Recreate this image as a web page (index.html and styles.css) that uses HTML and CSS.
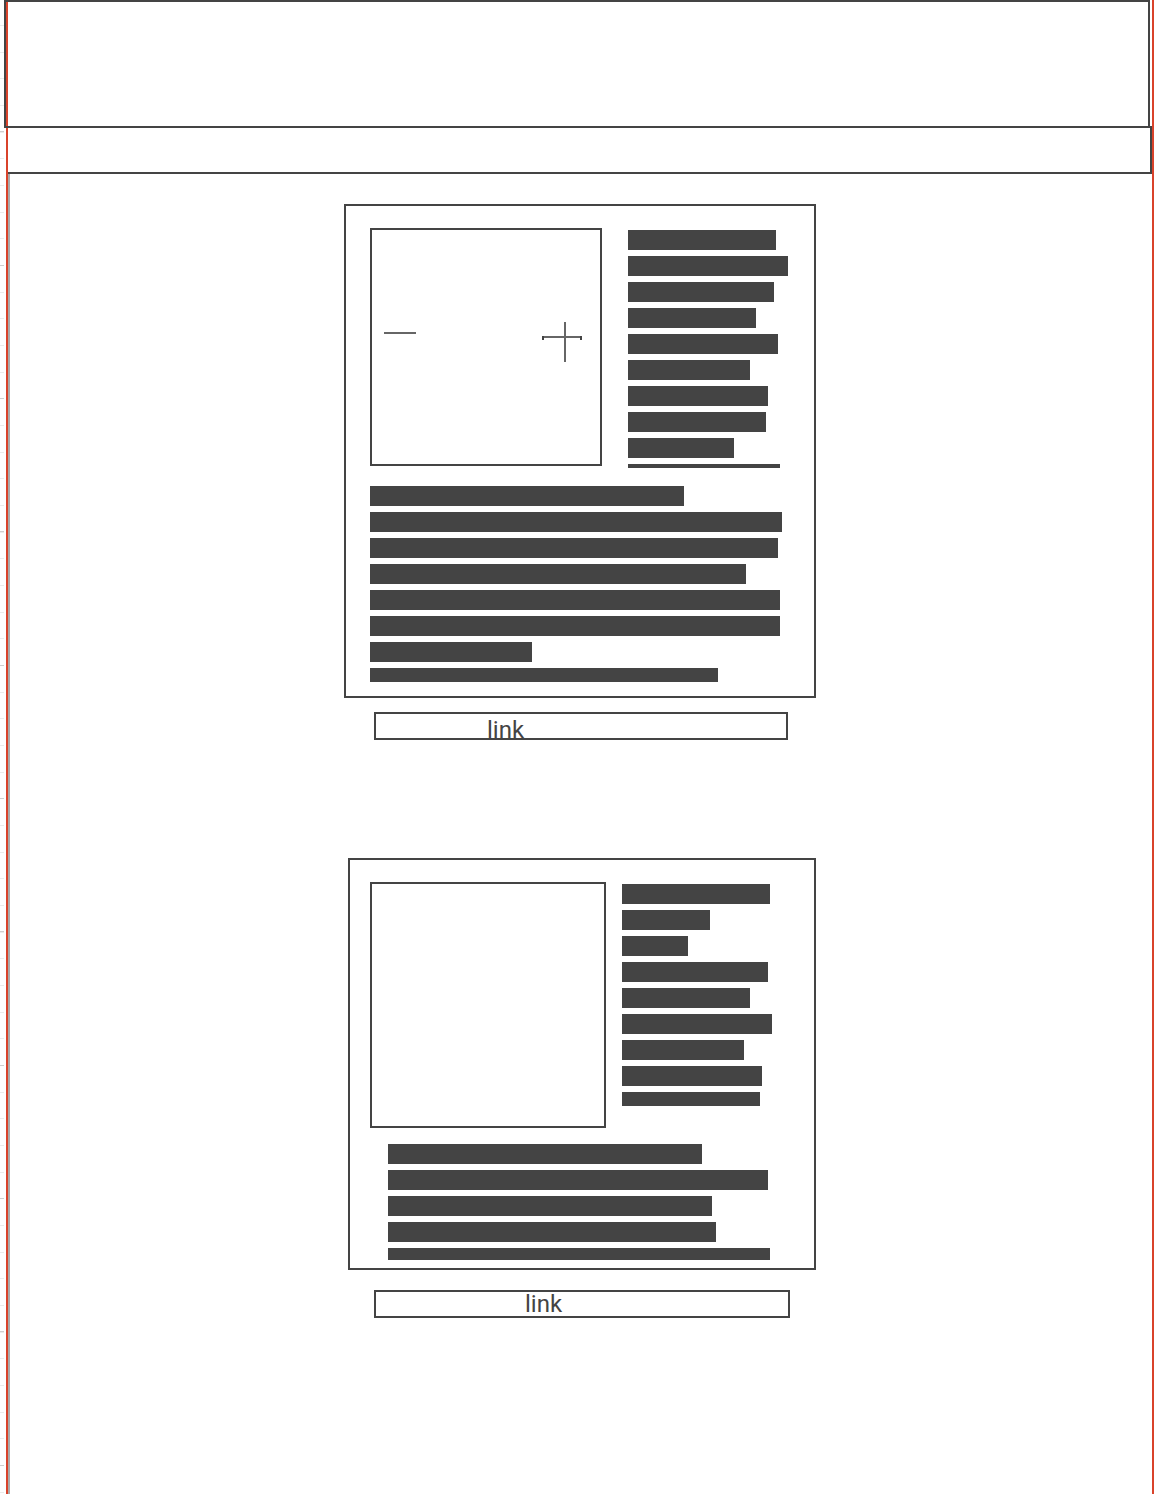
FILE: index.html
```html
<!DOCTYPE html>
<html>
<head>
    <meta charset="utf-8">
    <meta name="viewport" content="width=device-width,initial-scale=1.0"/>
    <title>wireframe</title>
    <link rel="stylesheet" href="styles.css">
</head>

<body>
<div class="page">

    <div class="header"></div>
    <div class="nav"></div>

    <div class="main">

        <!-- 第一个卡片 -->
        <div class="card card-a">
            <div class="top">
                <div class="pic">
                    <svg viewBox="0 0 228 234" width="228" height="234">
                        <line x1="12" y1="103" x2="44" y2="103" stroke="#666" stroke-width="2"/>
                        <line x1="170" y1="107" x2="210" y2="107" stroke="#666" stroke-width="2"/>
                        <line x1="193" y1="92" x2="193" y2="132" stroke="#666" stroke-width="2"/>
                        <line x1="171" y1="106" x2="171" y2="110" stroke="#444" stroke-width="2"/>
                        <line x1="209" y1="106" x2="209" y2="110" stroke="#444" stroke-width="2"/>
                    </svg>
                </div>
                <div class="side">
                    <i style="width:148px"></i>
                    <i style="width:160px"></i>
                    <i style="width:146px"></i>
                    <i style="width:128px"></i>
                    <i style="width:150px"></i>
                    <i style="width:122px"></i>
                    <i style="width:140px"></i>
                    <i style="width:138px"></i>
                    <i style="width:106px"></i>
                    <i style="width:152px"></i>
                </div>
            </div>
            <div class="text">
                <i style="width:314px"></i>
                <i style="width:412px"></i>
                <i style="width:408px"></i>
                <i style="width:376px"></i>
                <i style="width:410px"></i>
                <i style="width:410px"></i>
                <i style="width:162px"></i>
                <i style="width:348px"></i>
            </div>
        </div>
        <a class="link link-a">link</a>

        <!-- 第二个卡片 -->
        <div class="card card-b">
            <div class="top">
                <div class="pic"></div>
                <div class="side">
                    <i style="width:148px"></i>
                    <i style="width:88px"></i>
                    <i style="width:66px"></i>
                    <i style="width:146px"></i>
                    <i style="width:128px"></i>
                    <i style="width:150px"></i>
                    <i style="width:122px"></i>
                    <i style="width:140px"></i>
                    <i style="width:138px"></i>
                </div>
            </div>
            <div class="text">
                <i style="width:314px"></i>
                <i style="width:380px"></i>
                <i style="width:324px"></i>
                <i style="width:328px"></i>
                <i style="width:382px"></i>
            </div>
        </div>
        <a class="link link-b">link</a>

    </div>
</div>
</body>
</html>
```

FILE: styles.css
```css
*{box-sizing:border-box;  margin:0;  }
html{min-height:100%;  background:repeating-linear-gradient(to bottom,transparent 0 125.3px,#cfcfcf 125.3px 126.3px,transparent 126.3px 133.33px) 0 6px/4px 100% no-repeat,repeating-linear-gradient(to bottom,transparent 0 24.9px,#ebebeb 24.9px 25.9px,transparent 25.9px 26.667px) 0 0/4px 100% no-repeat,#fff;  }
body{padding:0;  font-family:Roboto,'Liberation Sans',sans-serif;  color:#444;  }

.page{margin-left:6px;  width:1148px;  min-height:1494px;  border-left:2px solid #d9432b;  border-right:2px solid #d9432b;  display:flex;  flex-direction:column;  }

.header{margin-left:-4px;  width:1146px;  height:128px;  border:2px solid #444;  }
.nav{margin-top:-2px;  height:48px;  border:2px solid #444;  border-left:none;  }

.main{flex:1;  border-left:2px solid #aaa;  padding-top:30px;  display:flex;  flex-direction:column;  align-items:flex-start;  }

.card{border:2px solid #444;  }
.card-a{margin-left:334px;  width:472px;  padding:22px 0 14px 24px;  }
.card-b{margin-top:118px;  margin-left:338px;  width:468px;  padding:22px 0 8px 20px;  }

.top{display:flex;  align-items:flex-start;  }
.pic{border:2px solid #444;  flex-shrink:0;  }
.pic svg{display:block;  }
.card-a .pic{width:232px;  height:238px;  }
.card-b .pic{width:236px;  height:246px;  }

.side,.text{display:flex;  flex-direction:column;  gap:6px;  overflow:hidden;  }
.side{margin-top:2px;  }
.card-a .side{margin-left:26px;  height:238px;  }
.card-b .side{margin-left:16px;  height:222px;  }
.card-a .text{margin-top:18px;  height:196px;  }
.card-b .text{margin-top:16px;  margin-left:18px;  height:116px;  }

i{display:block;  height:20px;  flex-shrink:0;  background:#444;  }

.link{display:block;  margin-left:364px;  height:28px;  border:2px solid #444;  overflow:hidden;  font-size:24px;  line-height:24px;  color:#444;  text-decoration:none;  }
.link-a{margin-top:14px;  width:414px;  padding:4px 0 0 111px;  }
.link-b{margin-top:20px;  width:416px;  padding-left:149px;  }
```
